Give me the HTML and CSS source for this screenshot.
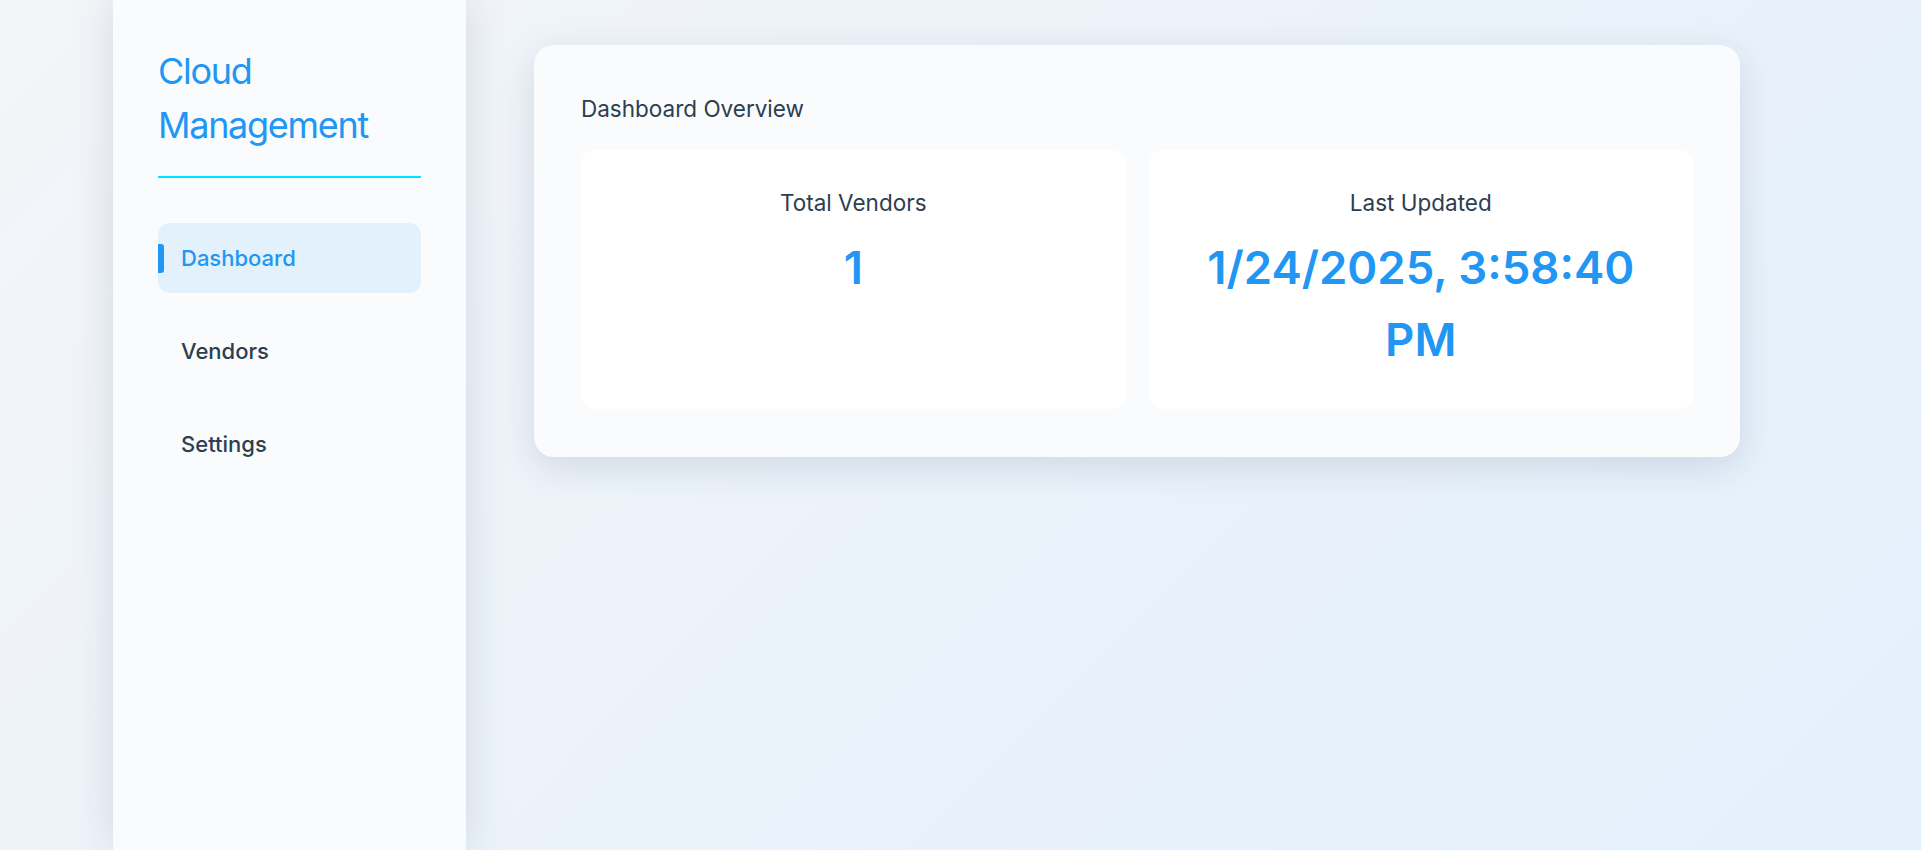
FILE: index.html
```html
<!DOCTYPE html>
<html lang="en">
<head>
<meta charset="utf-8">
<title>Cloud Management</title>
<link rel="stylesheet" href="styles.css">
</head>
<body>
<div class="app">
  <aside class="sidebar">
    <h1 class="brand">Cloud Management</h1>
    <nav class="nav">
      <a class="nav-item active" href="#">Dashboard</a>
      <a class="nav-item" href="#">Vendors</a>
      <a class="nav-item" href="#">Settings</a>
    </nav>
  </aside>
  <main class="main">
    <section class="panel">
      <h2 class="panel-title">Dashboard Overview</h2>
      <div class="stats">
        <div class="stat">
          <div class="stat-label">Total Vendors</div>
          <div class="stat-value">1</div>
        </div>
        <div class="stat">
          <div class="stat-label">Last Updated</div>
          <div class="stat-value">1/24/2025, 3:58:40 PM</div>
        </div>
      </div>
    </section>
  </main>
</div>
</body>
</html>
```

FILE: styles.css
```css
* {
  box-sizing: border-box;
}

html, body {
  margin: 0;
  padding: 0;
}

body {
  min-height: 100vh;
  font-family: Inter, "Noto Sans", "Liberation Sans", sans-serif;
  line-height: 1.6;
  color: #2c3e50;
  background: linear-gradient(135deg, #f3f5f8 0%, #e3f0fc 100%);
  background-attachment: fixed;
}

.app {
  display: flex;
  max-width: 1695px;
  min-height: 100vh;
  margin: 0 auto;
}

.sidebar {
  flex: 0 0 353px;
  width: 353px;
  padding: 44px 45px;
  background: #f9fbfd;
  box-shadow: 0 0 40px rgba(30, 50, 80, 0.13);
  position: relative;
  z-index: 1;
}

.brand {
  margin: 0;
  padding-bottom: 24px;
  border-bottom: 2px solid #00e5ff;
  font-size: 36px;
  line-height: 54px;
  font-weight: 400;
  letter-spacing: -1.3px;
  color: #2196f3;
}

.nav {
  display: flex;
  flex-direction: column;
  gap: 23px;
  margin-top: 45px;
}

.nav-item {
  position: relative;
  display: flex;
  align-items: center;
  height: 70px;
  padding: 1px 23px 0;
  border-radius: 12px;
  font-size: 22px;
  font-weight: 500;
  color: #2c3e50;
  text-decoration: none;
}

.nav-item.active {
  background: #e3f1fd;
  color: #2196f3;
}

.nav-item.active::before {
  content: "";
  position: absolute;
  left: 0;
  top: 21px;
  width: 6px;
  height: 29px;
  border-radius: 0 3px 3px 0;
  background: #2196f3;
}

.main {
  flex: 1;
  padding: 45px 68px;
}

.panel {
  padding: 46px 47px 48px;
  border-radius: 20px;
  background: #f9fbfd;
  box-shadow: 0 10px 36px rgba(30, 50, 80, 0.13);
}

.panel-title {
  margin: 0 0 24px;
  font-size: 22.5px;
  line-height: 35px;
  font-weight: 400;
  color: #2c3e50;
}

.stats {
  display: grid;
  grid-template-columns: 1fr 1fr;
  gap: 23px;
}

.stat {
  padding: 36px 24px 33px;
  border-radius: 14px;
  background: #ffffff;
  text-align: center;
}

.stat-label {
  margin-bottom: 12px;
  font-size: 22.5px;
  line-height: 34px;
  color: #2c3e50;
}

.stat-value {
  font-size: 45.5px;
  line-height: 72px;
  font-weight: 600;
  color: #2196f3;
}
```
